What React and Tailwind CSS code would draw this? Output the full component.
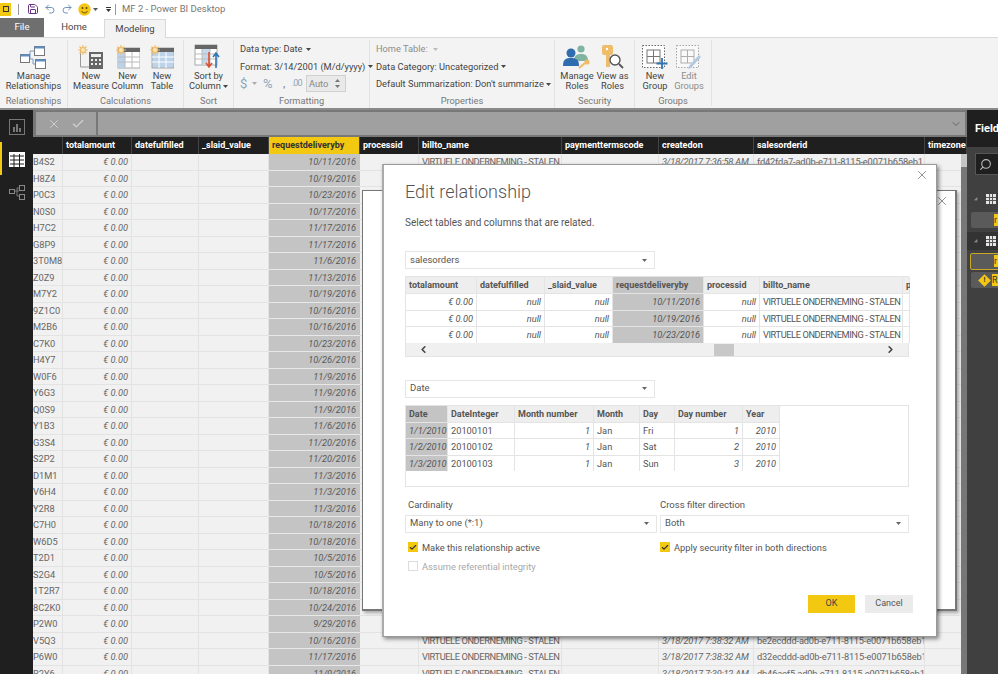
import React from 'react';
import { X, Check, ChevronDown, ChevronLeft, ChevronRight, Search, Undo2, Redo2, Save } from 'lucide-react';

const ids = ['B4S2','H8Z4','P0C3','N0S0','H7C2','G8P9','3T0M8','Z0Z9','M7Y2','9Z1C0','M2B6','C7K0','H4Y7','W0F6','Y6G3','Q0S9','Y1B3','G3S4','S2P2','D1M1','V6H4','Y2R8','C7H0','W6D5','T2D1','S2G4','1T2R7','8C2K0','P2W0','V5Q3','P6W0','R2Y6'];
const dates = ['10/11/2016','10/19/2016','10/23/2016','10/17/2016','11/17/2016','11/17/2016','11/6/2016','11/13/2016','10/19/2016','10/16/2016','10/16/2016','10/23/2016','10/26/2016','11/9/2016','11/9/2016','11/9/2016','11/6/2016','11/20/2016','11/20/2016','11/3/2016','11/3/2016','11/3/2016','10/18/2016','10/18/2016','10/5/2016','10/5/2016','10/18/2016','10/24/2016','9/29/2016','10/16/2016','11/17/2016','11/9/2016'];

const orderInfo = {
  0: ['3/18/2017 7:36:58 AM', 'fd42fda7-ad0b-e711-8115-e0071b658eb1'],
  29: ['3/18/2017 7:38:32 AM', 'be2ecddd-ad0b-e711-8115-e0071b658eb1'],
  30: ['3/18/2017 7:38:32 AM', 'd32ecddd-ad0b-e711-8115-e0071b658eb1'],
  31: ['3/18/2017 7:39:12 AM', 'db46aef5-ad0b-e711-8115-e0071b658eb1'],
};

const gridColumns = [
  { name: '', width: 'w-[30px]' },
  { name: 'totalamount', width: 'w-[69px]' },
  { name: 'datefulfilled', width: 'w-[67px]' },
  { name: '_slaid_value', width: 'w-[70px]' },
  { name: 'requestdeliveryby', width: 'w-[91px]' },
  { name: 'processid', width: 'w-[59px]' },
  { name: 'billto_name', width: 'w-[143px]' },
  { name: 'paymenttermscode', width: 'w-[97px]' },
  { name: 'createdon', width: 'w-[95px]' },
  { name: 'salesorderid', width: 'w-[171px]' },
  { name: 'timezonerule', width: 'w-[42px]' },
];

const salesCols = [
  { name: 'totalamount', width: 'w-[71px]', right: true, values: ['€ 0.00', '€ 0.00', '€ 0.00'] },
  { name: 'datefulfilled', width: 'w-[68px]', right: true, values: ['null', 'null', 'null'] },
  { name: '_slaid_value', width: 'w-[68px]', right: true, values: ['null', 'null', 'null'] },
  { name: 'requestdeliveryby', width: 'w-[91px]', right: true, dark: true, values: ['10/11/2016', '10/19/2016', '10/23/2016'] },
  { name: 'processid', width: 'w-[56px]', right: true, values: ['null', 'null', 'null'] },
  { name: 'billto_name', width: 'w-[143px]', tight: true, values: ['VIRTUELE ONDERNEMING - STALEN', 'VIRTUELE ONDERNEMING - STALEN', 'VIRTUELE ONDERNEMING - STALEN'] },
  { name: 'p', width: 'w-[7px]', values: ['', '', ''] },
];

const dateCols = [
  { name: 'Date', width: 'w-[42px]', right: true, dark: true, values: ['1/1/2010', '1/2/2010', '1/3/2010'] },
  { name: 'DateInteger', width: 'w-[67px]', values: ['20100101', '20100102', '20100103'] },
  { name: 'Month number', width: 'w-[79px]', right: true, values: ['1', '1', '1'] },
  { name: 'Month', width: 'w-[46px]', values: ['Jan', 'Jan', 'Jan'] },
  { name: 'Day', width: 'w-[35px]', values: ['Fri', 'Sat', 'Sun'] },
  { name: 'Day number', width: 'w-[68px]', right: true, values: ['1', '2', '3'] },
  { name: 'Year', width: 'w-[37px]', right: true, values: ['2010', '2010', '2010'] },
];

const Caret = ({ className = '' }) => (
  <svg width="5" height="3" viewBox="0 0 5 3" className={`inline-block ${className}`}>
    <path d="M0 0h5L2.5 3z" fill="currentColor" />
  </svg>
);

const ManageRelationshipsIcon = () => (
  <svg width="26" height="24" viewBox="0 0 26 24">
    <path d="M8 14h5M10 14V6h4M13 14v5h2" stroke="#7a9cc4" fill="none" />
    <rect x="0.5" y="9.5" width="9" height="8" fill="#fff" stroke="#777" />
    <rect x="0.5" y="9.5" width="9" height="2" fill="#5b8fc7" />
    <rect x="14.5" y="1.5" width="10" height="9" fill="#fff" stroke="#777" />
    <rect x="14.5" y="1.5" width="10" height="2" fill="#5b8fc7" />
    <rect x="15.5" y="14.5" width="10" height="9" fill="#fff" stroke="#777" />
    <rect x="15.5" y="14.5" width="10" height="2" fill="#5b8fc7" />
  </svg>
);

const Spark = () => (
  <g stroke="#eebc6a" strokeWidth="1.2">
    <path d="M5 0v10M0 5h10M1.5 1.5l7 7M8.5 1.5l-7 7" />
    <circle cx="5" cy="5" r="2.5" fill="#fbe6b8" stroke="#eebc6a" />
  </g>
);

const MeasureIcon = () => (
  <svg width="26" height="24" viewBox="0 0 26 24">
    <path d="M2.5 6v16h13" fill="none" stroke="#999" />
    <rect x="11" y="7" width="14" height="17" fill="#666" />
    <rect x="13" y="9" width="10" height="3" fill="#eee" />
    <path d="M13 14h2v2h-2zM17 14h2v2h-2zM21 14h2v2h-2zM13 18h2v2h-2zM17 18h2v2h-2zM21 18h2v2h-2z" fill="#eee" />
    <Spark />
  </svg>
);

const TableIcon = ({ fill }) => (
  <svg width="24" height="24" viewBox="0 0 24 24">
    <rect x="2" y="3" width="22" height="20" fill={fill} stroke="#aaa" />
    <rect x="2" y="3" width="22" height="4" fill="#666" />
    {fill === '#fff' && <rect x="2" y="7" width="7" height="16" fill="#bcd3ea" />}
    <path d="M9 7v16M16 7v16M2 12h22M2 17h22" stroke={fill === '#fff' ? '#bbb' : '#fff'} />
    <Spark />
  </svg>
);

const SortIcon = () => (
  <svg width="28" height="26" viewBox="0 0 28 26">
    <rect x="1" y="1" width="22" height="20" fill="#fff" stroke="#aaa" />
    <rect x="1" y="1" width="22" height="4" fill="#666" />
    <rect x="8" y="5" width="8" height="16" fill="#c4d8ec" />
    <path d="M8 5v16M16 5v16M1 10h22M1 15h22" stroke="#bbb" />
    <path d="M15 8v15M12 19l3 4 3-4" stroke="#d9502e" strokeWidth="1.6" fill="none" />
    <path d="M22 24V9M19 13l3-4 3 4" stroke="#2f75b5" strokeWidth="1.6" fill="none" />
  </svg>
);

const RolesIcon = () => (
  <svg width="28" height="24" viewBox="0 0 28 24">
    <circle cx="18" cy="4" r="3.6" fill="#7fb5a0" />
    <path d="M11 16c0-6 3-7 7-7s7 1 7 7z" fill="#7fb5a0" />
    <circle cx="8" cy="8" r="4.5" fill="#2f6db0" />
    <path d="M0 21c0-7 3-8 8-8s8 1 8 8z" fill="#2f6db0" />
    <circle cx="24" cy="17" r="2.6" fill="#eebc6a" />
    <path d="M22 18l-6 5" stroke="#eebc6a" strokeWidth="2.2" />
  </svg>
);

const ViewRolesIcon = () => (
  <svg width="22" height="24" viewBox="0 0 22 24">
    <rect x="0" y="0" width="11" height="10" rx="2" fill="#eebc6a" />
    <rect x="4" y="8" width="4" height="14" fill="#eebc6a" />
    <circle cx="5" cy="4" r="1.2" fill="#fff" />
    <circle cx="13" cy="15" r="5" fill="#fff" stroke="#555" strokeWidth="1.4" />
    <path d="M17 19l4 4" stroke="#555" strokeWidth="1.8" />
  </svg>
);

const GroupIcon = ({ edit }) => (
  <svg width="26" height="25" viewBox="0 0 26 25" opacity={edit ? 0.55 : 1}>
    <rect x="0.5" y="0.5" width="22" height="22" fill="#fff" stroke="#666" strokeDasharray="1.5 1.5" />
    <rect x="5" y="5" width="13" height="13" fill="#fff" stroke="#777" />
    <path d="M11.5 5v13M5 11.5h13" stroke="#777" />
    {edit
      ? <path d="M13 21l10-11 2 2-10 11-3 1z" fill="#7aa7d4" />
      : <path d="M20 13v11M14.5 18.5h11" stroke="#2f75b5" strokeWidth="1.8" />}
  </svg>
);

const BigButton = ({ icon, lines, muted, width = '' }) => (
  <div className={`flex flex-col items-center shrink-0 ${width}`}>
    <div className="h-[26px] flex items-center justify-center">{icon}</div>
    <div className={`mt-[1px] text-center text-[9.25px] leading-[10px] whitespace-nowrap ${muted ? 'text-[#8d8d8d]' : 'text-[#444]'}`}>
      {lines.map((l) => <div key={l}>{l}</div>)}
    </div>
  </div>
);

const RibbonGroup = ({ label, width, children, className = '', last }) => (
  <div className={`flex flex-col h-full shrink-0 ${width} ${last ? '' : 'border-r border-[#e2e2e2]'}`}>
    <div className={`flex-1 ${className}`}>{children}</div>
    <div className="h-[13px] text-center text-[9.25px] leading-[12px] text-[#777]">{label}</div>
  </div>
);

const Ribbon = () => (
  <div className="h-[71px] bg-[#f3f3f3] border-t border-[#d9d9d9] flex pt-[2px] text-[#444]">
    <RibbonGroup label="Relationships" width="w-[68px]" className="flex justify-center pt-[4px]">
      <BigButton icon={<ManageRelationshipsIcon />} lines={['Manage', 'Relationships']} />
    </RibbonGroup>
    <RibbonGroup label="Calculations" width="w-[116px]" className="flex pl-[5px] pt-[4px]">
      <BigButton icon={<MeasureIcon />} lines={['New', 'Measure']} width="w-[36px]" />
      <BigButton icon={<TableIcon fill="#fff" />} lines={['New', 'Column']} width="w-[37px]" />
      <BigButton icon={<TableIcon fill="#bcd3ea" />} lines={['New', 'Table']} width="w-[32px]" />
    </RibbonGroup>
    <RibbonGroup label="Sort" width="w-[50px]" className="flex justify-center pt-[4px]">
      <div className="flex flex-col items-center">
        <div className="h-[26px] flex items-center"><SortIcon /></div>
        <div className="mt-[1px] text-center text-[9.25px] leading-[10px] whitespace-nowrap">
          <div>Sort by</div>
          <div>Column <Caret /></div>
        </div>
      </div>
    </RibbonGroup>
    <RibbonGroup label="Formatting" width="w-[136px]" className="pl-[6px] text-[9.25px] leading-[17.5px]">
      <div className="whitespace-nowrap">Data type: Date <Caret className="ml-[1px] mb-[1px]" /></div>
      <div className="whitespace-nowrap">Format: 3/14/2001 (M/d/yyyy) <Caret className="mb-[1px]" /></div>
      <div className="flex items-center text-[#9a9a9a]">
        <span className="text-[13px] text-[#8fa5bb] w-[12px]">$</span>
        <Caret className="text-[#aaa] mr-[6px]" />
        <span className="text-[13px] text-[#8fa5bb] w-[17px]">%</span>
        <span className="font-bold w-[12px] pl-[3px] text-[#888]">,</span>
        <span className="text-[9px] tracking-[-1px] w-[13px] text-[#8fa5bb]">.00</span>
        <span className="ml-[1px] w-[40px] h-[17px] bg-[#e9e9e9] border border-[#d0d0d0] flex items-center justify-between pl-[2px] pr-[5px] text-[#888] leading-none">
          Auto
          <span className="flex flex-col gap-[3px] text-[#777]"><Caret className="rotate-180 block" /><Caret className="block" /></span>
        </span>
      </div>
    </RibbonGroup>
    <RibbonGroup label="Properties" width="w-[185px]" className="pl-[6px] text-[9.25px] leading-[17.5px]">
      <div className="text-[#8d8d8d]">Home Table: <Caret className="ml-[3px] mb-[1px] text-[#bbb]" /></div>
      <div className="whitespace-nowrap">Data Category: Uncategorized <Caret className="mb-[1px]" /></div>
      <div className="whitespace-nowrap">Default Summarization: Don't summarize <Caret className="mb-[1px]" /></div>
    </RibbonGroup>
    <RibbonGroup label="Security" width="w-[80px]" className="flex pl-[4px] pt-[4px]">
      <BigButton icon={<RolesIcon />} lines={['Manage', 'Roles']} width="w-[36px]" />
      <BigButton icon={<ViewRolesIcon />} lines={['View as', 'Roles']} width="w-[35px]" />
    </RibbonGroup>
    <RibbonGroup label="Groups" width="w-[76px]" className="flex pl-[2px] pt-[4px]" last>
      <BigButton icon={<GroupIcon />} lines={['New', 'Group']} width="w-[36px]" />
      <BigButton icon={<GroupIcon edit />} lines={['Edit', 'Groups']} muted width="w-[32px]" />
    </RibbonGroup>
    <div className="h-[66px] border-l border-[#e2e2e2]" />
  </div>
);

const TitleBar = () => (
  <div className="h-[18px] bg-white flex items-center text-[#777]">
    <div className="w-[11px] h-[13px] bg-[#f2c811] flex items-center justify-center">
      <div className="w-[6px] h-[6px] border border-[#333]" />
    </div>
    <div className="w-px h-[11px] bg-[#999] ml-[7px] mr-[8px]" />
    <Save className="w-[12px] h-[12px] text-[#68317f]" />
    <Undo2 className="w-[12px] h-[12px] ml-[5px] text-[#6f93b8]" />
    <Redo2 className="w-[12px] h-[12px] ml-[5px] text-[#6f93b8]" />
    <svg width="13" height="13" viewBox="0 0 13 13" className="ml-[5px]">
      <circle cx="6.5" cy="6.5" r="6.2" fill="#f5c518" />
      <circle cx="4.5" cy="5" r="1" fill="#5a4a00" />
      <circle cx="8.5" cy="5" r="1" fill="#5a4a00" />
      <path d="M3.5 8c1.5 2.5 4.5 2.5 6 0" fill="none" stroke="#5a4a00" />
    </svg>
    <Caret className="ml-[2px] text-[#555]" />
    <div className="ml-[8px] flex flex-col gap-[1px] text-[#333]">
      <div className="w-[5px] h-px bg-current" />
      <Caret className="block" />
    </div>
    <div className="w-px h-[11px] bg-[#999] ml-[4px] mr-[6px]" />
    <span className="text-[9.5px] pt-px">MF 2 - Power BI Desktop</span>
  </div>
);

const Tabs = () => (
  <div className="h-[19px] bg-white flex items-end text-[9.5px] text-[#444]">
    <div className="w-[44px] h-[19px] bg-[#6f6f6f] text-white flex items-center justify-center">File</div>
    <div className="w-[60px] h-[19px] flex items-center justify-center">Home</div>
    <div className="w-[62px] h-[19px] bg-[#f3f3f3] border-x border-t border-[#d9d9d9] flex items-center justify-center relative top-px z-10">Modeling</div>
  </div>
);

const LeftRail = () => (
  <div className="w-[33px] shrink-0 bg-[#1f1f1f] relative flex flex-col items-center pt-[9px]">
    <svg width="16" height="16" viewBox="0 0 16 16">
      <rect x="0.5" y="0.5" width="15" height="15" fill="none" stroke="#777" />
      <path d="M4 13V8h2v5zM7 13V5h2v8zM10 13V9h2v4z" fill="#777" />
    </svg>
    <svg width="16" height="15" viewBox="0 0 16 15" className="mt-[17px]">
      <rect x="0" y="0" width="16" height="15" fill="#fff" />
      <path d="M1 4h14M1 8h14M1 12h14M5 2v13M10.5 2v13" stroke="#1f1f1f" />
      <rect x="0" y="0" width="16" height="2" fill="#fff" />
    </svg>
    <svg width="16" height="15" viewBox="0 0 16 15" className="mt-[18px]">
      <path d="M6 6h4M8 6V3h2M8 6v5h2" stroke="#777" fill="none" />
      <rect x="0.5" y="4.5" width="5" height="4" fill="none" stroke="#888" />
      <rect x="10.5" y="0.5" width="5" height="5" fill="none" stroke="#888" />
      <rect x="10.5" y="9.5" width="5" height="5" fill="none" stroke="#888" />
    </svg>
    {/* active view marker */}
    <div className="absolute left-0 top-[32px] w-[2px] h-[33px] bg-[#f2c811]" />
  </div>
);

const FormulaBar = () => (
  <div className="h-[27px] bg-[#787878] flex items-center gap-[2px] pl-[3px] pr-[2px] py-[2px]">
    <div className="w-[60px] h-[23px] bg-[#a0a0a0] flex items-center justify-around px-[6px] text-[#d2d2d2]">
      <X className="w-[14px] h-[14px]" strokeWidth={1.5} />
      <Check className="w-[14px] h-[14px]" strokeWidth={2} />
    </div>
    <div className="flex-1 h-[23px] bg-[#a0a0a0] flex items-center justify-end pr-[3px] text-[#666]">
      <ChevronDown className="w-[12px] h-[12px]" />
    </div>
  </div>
);

const GridRow = ({ index }) => {
  const info = orderInfo[index];
  const billto = index === 0 || index >= 29;
  return (
    <div className="flex h-[16.5px] text-[9.25px] leading-[16px] text-[#666] whitespace-nowrap">
      <div className="w-[30px] overflow-hidden border-r border-b border-[#e3e3e3] bg-[#f1f1f1]">{ids[index]}</div>
      <div className="w-[69px] pr-[3px] text-right italic border-r border-b border-[#e3e3e3] bg-[#f1f1f1]">€ 0.00</div>
      <div className="w-[67px] border-r border-b border-[#e3e3e3] bg-[#f1f1f1]" />
      <div className="w-[70px] border-r border-b border-[#e3e3e3] bg-[#f1f1f1]" />
      <div className="w-[91px] pr-[4px] text-right italic border-b border-[#e8e8e8] bg-[#c4c4c4] text-[#5a5a5a]">{dates[index]}</div>
      <div className="w-[59px] border-r border-b border-[#e3e3e3] bg-[#f1f1f1]" />
      <div className="w-[143px] pl-[3px] tracking-[-0.4px] overflow-hidden border-r border-b border-[#e3e3e3] bg-[#f1f1f1]">{billto && 'VIRTUELE ONDERNEMING - STALEN'}</div>
      <div className="w-[97px] border-r border-b border-[#e3e3e3] bg-[#f1f1f1]" />
      <div className="w-[95px] pl-[3px] italic tracking-[-0.2px] overflow-hidden border-r border-b border-[#e3e3e3] bg-[#f1f1f1]">{info && info[0]}</div>
      <div className="w-[171px] pl-[3px] tracking-[-0.15px] overflow-hidden border-r border-b border-[#e3e3e3] bg-[#f1f1f1]">{info && info[1]}</div>
      <div className="flex-1 border-b border-[#e3e3e3] bg-[#f1f1f1]" />
    </div>
  );
};

const DataGrid = () => (
  <div className="flex-1 min-h-0 bg-[#f1f1f1] flex flex-col overflow-hidden">
    <div className="h-[17px] shrink-0 flex bg-[#1f1f1f] text-white text-[9px] font-bold leading-[17px] whitespace-nowrap">
      {gridColumns.map((c) => (
        <div
          key={c.name}
          className={`${c.width} pl-[3px] overflow-hidden border-r border-[#444] ${c.name === 'requestdeliveryby' ? 'bg-[#f2c811] text-[#333]' : ''}`}
        >
          {c.name}
        </div>
      ))}
    </div>
    <div className="flex-1 flex min-h-0">
      <div className="flex-1 min-w-0 overflow-hidden">
        {ids.map((id, i) => <GridRow key={id} index={i} />)}
      </div>
      <div className="w-[6px] shrink-0 bg-[#777]">
        <div className="h-[13px] bg-[#c4c4c4]" />
      </div>
    </div>
  </div>
);

const TableGlyph = () => (
  <svg width="10" height="10" viewBox="0 0 10 10" className="ml-[7px]">
    <rect width="10" height="10" fill="#e6e6e6" />
    <path d="M0 3.5h10M0 6.5h10M3.5 0v10M6.5 0v10" stroke="#555" />
  </svg>
);

const RightPanel = () => (
  <div className="w-[31px] shrink-0 bg-[#404040] flex flex-col overflow-hidden whitespace-nowrap">
    <div className="h-[37px] bg-[#1f1f1f] pl-[8px] pt-[11px] text-[11px] font-bold text-white shrink-0">Fields</div>
    <div className="h-[22px] ml-[8px] mt-[6px] w-[40px] bg-[#1f1f1f] border border-[#555] pl-[3px] flex items-center shrink-0">
      <Search className="w-[13px] h-[13px] text-[#bbb] -scale-x-100" />
    </div>
    <div className="h-[18px] mt-[15px] flex items-center pl-[7px] shrink-0">
      <Caret className="text-[#888] -rotate-45" />
      <TableGlyph />
    </div>
    <div className="h-[16px] ml-[4px] mt-[4px] w-[60px] bg-[#5a5a5a] rounded-[2px] pl-[23px] shrink-0">
      <span className="block w-[10px] h-[12px] mt-[2px] bg-[#f2c811] text-[9px] leading-[12px] text-[#333]">r</span>
    </div>
    <div className="h-[18px] mt-[4px] bg-[#333] flex items-center pl-[7px] shrink-0">
      <Caret className="text-[#888] -rotate-45" />
      <TableGlyph />
    </div>
    <div className="h-[17px] ml-[3px] mt-[3px] w-[60px] bg-[#5a5a5a] border border-[#c9a825] rounded-[2px] pl-[23px] shrink-0">
      <span className="block w-[10px] h-[12px] mt-[1px] bg-[#f2c811] text-[9px] leading-[12px] text-[#333]">r</span>
    </div>
    <div className="h-[16px] ml-[4px] mt-[2px] w-[60px] bg-[#5a5a5a] rounded-[2px] pl-[9px] flex items-center gap-[3px] shrink-0">
      <span className="w-[9px] h-[9px] bg-[#f2c811] rotate-45 text-[7px] leading-[9px] text-center text-[#333] font-bold"><span className="block -rotate-45">!</span></span>
      <span className="w-[10px] h-[12px] bg-[#f2c811] text-[9px] leading-[12px] text-[#333]">R</span>
    </div>
  </div>
);

const Combo = ({ label, width }) => (
  <div className={`${width} h-[18px] bg-white border border-[#e6e6e6] flex items-center justify-between pl-[4px] pr-[7px] text-[9.5px] text-[#555]`}>
    <span>{label}</span>
    <Caret className="text-[#666]" />
  </div>
);

const PreviewColumn = ({ col }) => (
  <div className={`${col.width} shrink-0 overflow-hidden whitespace-nowrap`}>
    <div className={`h-[16px] pl-[3px] text-[9px] font-bold leading-[16px] text-[#555] border-r border-[#e4e4e4] ${col.dark ? 'bg-[#c4c4c4]' : 'bg-[#eeeeee]'}`}>{col.name}</div>
    {col.values.map((v, i) => (
      <div
        key={i}
        className={`h-[16.5px] px-[3px] text-[9.25px] leading-[15px] text-[#555] border-t border-r border-[#e4e4e4] ${col.right ? 'text-right italic' : ''} ${col.tight ? 'tracking-[-0.4px]' : ''} ${col.dark ? 'bg-[#c4c4c4]' : 'bg-white'}`}
      >
        {v}
      </div>
    ))}
  </div>
);

const CheckRow = ({ label, checked, disabled }) => (
  <div className={`flex items-center gap-[4px] text-[9.3px] leading-[13px] ${disabled ? 'text-[#a8a8a8]' : 'text-[#555]'}`}>
    <span className={`w-[10px] h-[10px] flex items-center justify-center border ${checked ? 'bg-[#f2c811] border-[#f2c811]' : 'bg-white border-[#ddd]'}`}>
      {checked && <Check className="w-[9px] h-[9px] text-[#333]" strokeWidth={3.5} />}
    </span>
    {label}
  </div>
);

const BackDialog = () => (
  <div className="absolute left-[362px] top-[190px] w-[595px] h-[421px] bg-white border border-[#777] border-r-2 border-b-2 shadow-[2px_2px_3px_rgba(0,0,0,0.3)]">
    <X className="absolute right-[6px] top-[3px] w-[14px] h-[14px] text-[#666]" strokeWidth={1.2} />
  </div>
);

const EditDialog = () => (
  <div className="absolute left-[382px] top-[164px] w-[555px] h-[473px] bg-white border border-[#999] border-l-2 border-l-[#aaa] shadow-[2px_2px_4px_rgba(0,0,0,0.45)] pl-[21px] text-[#555]">
    <X className="absolute right-[7px] top-[3px] w-[14px] h-[14px] text-[#666]" strokeWidth={1.2} />
    <h1 className="mt-[15px] text-[18px] leading-[24px] font-light text-[#555]">Edit relationship</h1>
    <p className="mt-[12px] text-[10px] leading-[14px]">Select tables and columns that are related.</p>

    <div className="mt-[21px]"><Combo label="salesorders" width="w-[250px]" /></div>
    <div className="mt-[7px] w-[504px] border border-[#e4e4e4]">
      <div className="flex">
        {salesCols.map((c) => <PreviewColumn key={c.name} col={c} />)}
      </div>
      <div className="h-[13px] bg-[#f0f0f0] relative flex items-center justify-between px-[12px] text-[#444]">
        <ChevronLeft className="w-[11px] h-[11px]" strokeWidth={3.5} />
        <div className="absolute left-[308px] top-[1px] w-[20px] h-[12px] bg-[#c8c8c8]" />
        <ChevronRight className="w-[11px] h-[11px]" strokeWidth={3.5} />
      </div>
    </div>

    <div className="mt-[23px]"><Combo label="Date" width="w-[250px]" /></div>
    <div className="mt-[7px] w-[504px] h-[82px] border border-[#e4e4e4] flex">
      {dateCols.map((c) => <PreviewColumn key={c.name} col={c} />)}
    </div>

    <div className="mt-[11px] flex gap-[3px]">
      <div className="w-[252px]">
        <div className="pl-[3px] text-[9.5px] leading-[14px]">Cardinality</div>
        <div className="mt-[3px]"><Combo label="Many to one (*:1)" width="w-[252px]" /></div>
        <div className="mt-[8px] pl-[3px]"><CheckRow label="Make this relationship active" checked /></div>
        <div className="mt-[6px] pl-[3px]"><CheckRow label="Assume referential integrity" disabled /></div>
      </div>
      <div className="w-[249px]">
        <div className="text-[9.5px] leading-[14px]">Cross filter direction</div>
        <div className="mt-[3px]"><Combo label="Both" width="w-[249px]" /></div>
        <div className="mt-[8px]"><CheckRow label="Apply security filter in both directions" checked /></div>
      </div>
    </div>

    <div className="absolute right-[23px] bottom-[23px] flex gap-[10px] text-[9px]">
      <button className="w-[47px] h-[18px] bg-[#f2c811] text-[#444]">OK</button>
      <button className="w-[48px] h-[18px] bg-[#ebebeb] text-[#555]">Cancel</button>
    </div>
  </div>
);

export default function App() {
  return (
    <div className="relative w-[998px] h-[674px] overflow-hidden bg-white font-['Roboto',sans-serif] flex flex-col">
      <TitleBar />
      <Tabs />
      <Ribbon />
      <div className="h-[2px] bg-[#8a8a8a]" />
      <div className="flex-1 min-h-0 flex">
        <LeftRail />
        <div className="flex-1 min-w-0 flex flex-col">
          <FormulaBar />
          <DataGrid />
        </div>
        <RightPanel />
      </div>
      <BackDialog />
      <EditDialog />
    </div>
  );
}
